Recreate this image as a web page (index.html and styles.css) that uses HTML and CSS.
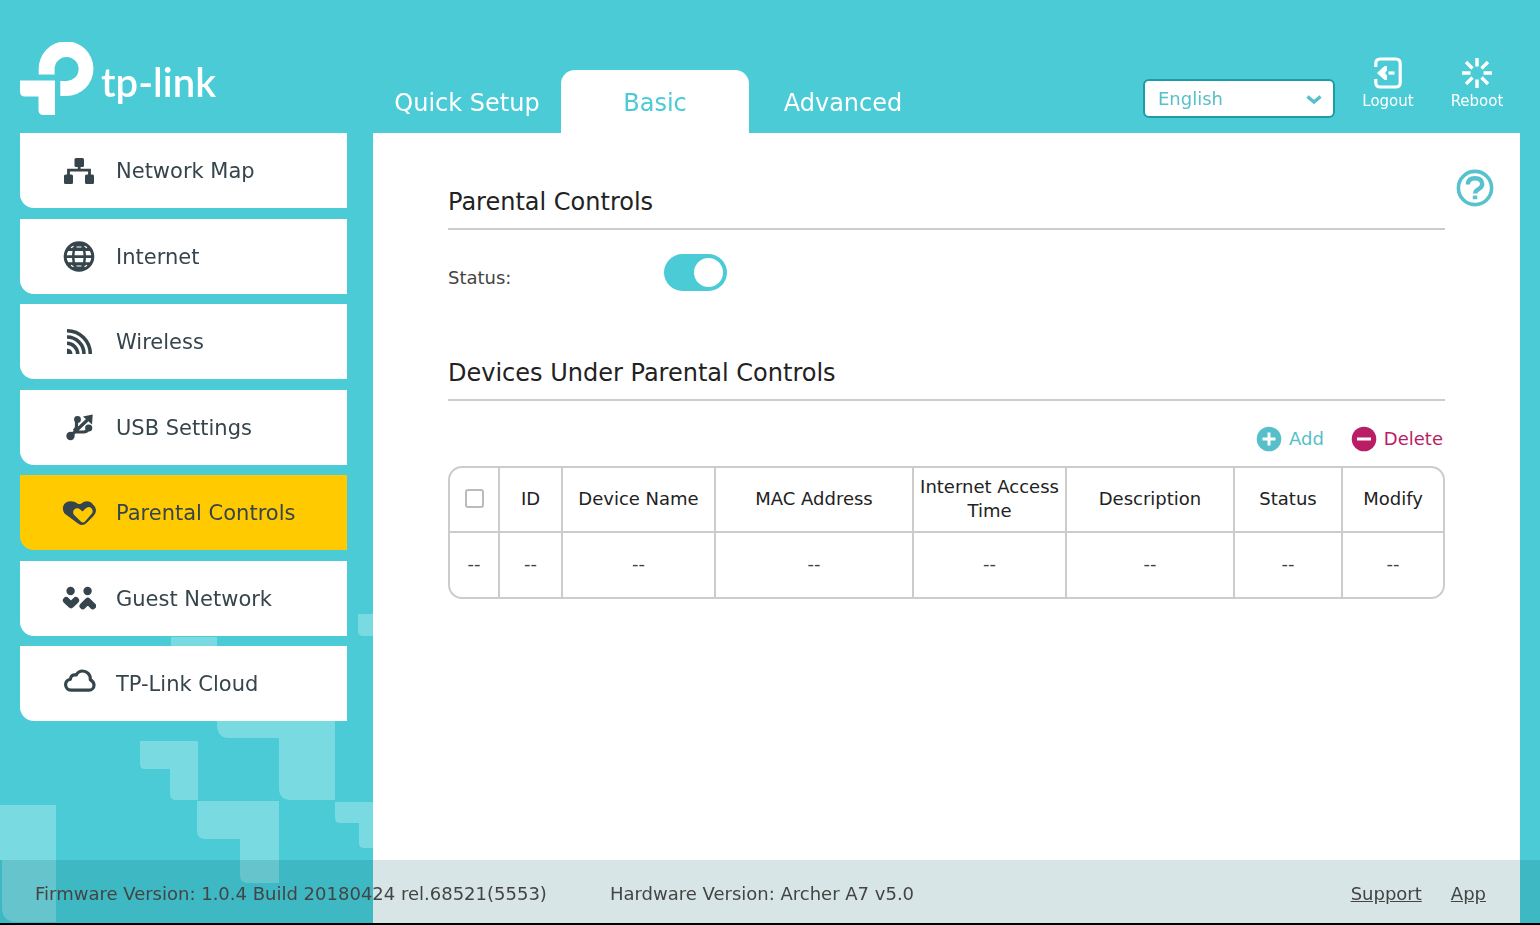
FILE: index.html
```html
<!DOCTYPE html>
<html lang="en">
<head>
<meta charset="utf-8">
<meta name="viewport" content="width=device-width, initial-scale=1">
<title>Parental Controls</title>
<link rel="stylesheet" href="styles.css">
</head>
<body>
<svg class="backdrop" viewBox="0 613 373 310" aria-hidden="true">
  <path d="M358 614h20v22h-15q-5 0-5-5z"/>
  <path d="M171 637h46v40h-46z"/>
  <path d="M217 700h118v100h-44q-12 0-12-12v-50h-50q-12 0-12-14z"/>
  <path d="M140 741h58v59h-22q-6 0-6-6v-25h-25q-5 0-5-5z"/>
  <path d="M197 801h82v82h-31q-8 0-8-8v-36h-35q-8 0-8-8z"/>
  <path d="M335 802h43v46h-14q-5 0-5-5v-20h-19q-5 0-5-5z"/>
  <path d="M0 805h56v117H17q-15 0-15-15v-47H0z"/>
</svg>

<header class="header">
  <div class="brand">
    <svg class="brand-mark" viewBox="20 42 74 73" aria-hidden="true">
      <path d="M38.7 74.4V69.5a27.4 27.4 0 1 1 27.4 26.6h-5.8V81H66a12 12 0 1 0-11.4-12v5.4z"/>
      <path d="M20 80.4h35V115H43.500q-5 0-5-5V96.600H25q-5 0-5-5z"/>
    </svg>
    <span class="brand-name">tp-link</span>
  </div>
  <nav class="tabs" aria-label="Sections">
    <a class="tab" href="#quick">Quick Setup</a>
    <a class="tab tab-active" href="#basic" aria-current="page">Basic</a>
    <a class="tab" href="#advanced">Advanced</a>
  </nav>
  <div class="tools">
    <div class="language">
      <select class="language-select" aria-label="Language"><option>English</option></select>
      <svg class="language-arrow" viewBox="0 0 16 10" aria-hidden="true"><path d="M1.500 1.500l6.500 5.500 6.500-5.500"/></svg>
    </div>
    <button class="tool" type="button">
      <svg class="tool-icon" viewBox="0 0 32 32" aria-hidden="true">
        <path d="M3.800 10V6.500q0-4.500 4.500-4.500h15.400q4.500 0 4.500 4.500v19q0 4.500-4.500 4.500H8.300q-4.500 0-4.500-4.500v-3.500" stroke-width="3.200"/>
        <path d="M16.500 16h6" stroke-width="3.200"/>
        <path d="M5.500 16l7-6.500h2v4L12.500 16l2 2.500v4h-2z" class="solid" stroke-width="1"/>
      </svg>
      <span>Logout</span>
    </button>
    <button class="tool" type="button">
      <svg class="tool-icon" viewBox="0 0 32 32" aria-hidden="true">
        <path stroke-width="3.400" d="M16 1v8.500M16 22.500V31M1 16h8.500M22.500 16H31M5 5l6.500 6.500M20.500 20.500L27 27M27 5l-6.500 6.500M11.500 20.500L5 27"/>
      </svg>
      <span>Reboot</span>
    </button>
  </div>
</header>

<div class="layout">
  <nav class="menu" aria-label="Basic settings">
    <a class="menu-item" href="#map">
      <svg class="menu-icon" viewBox="0 0 34 34" aria-hidden="true">
        <rect x="12.500" y="4" width="9.500" height="9" rx="1.500"/><rect x="2" y="20.500" width="9" height="9.500" rx="1.500"/><rect x="23" y="20.500" width="9" height="9.500" rx="1.500"/>
        <path class="line" stroke-width="2.800" d="M17.200 12v4M6.500 22v-5.800h21V22"/>
      </svg>Network Map</a>
    <a class="menu-item" href="#internet">
      <svg class="menu-icon" viewBox="0 0 34 34" aria-hidden="true">
        <circle cx="17" cy="16.500" r="15.300"/>
        <path class="cut" d="M13 11h8l.5 4.300h-9zM12.500 18h9L21 22.300h-8zM6.200 11h4.300l-.5 4.300H4.800q.2-2.500 1.400-4.300zM27.800 11h-4.300l.5 4.300h5.200q-.2-2.500-1.400-4.300zM4.800 18H10l.5 4.300H6.200Q5 20.500 4.800 18zM29.200 18H24l-.5 4.300h4.300q1.200-1.800 1.400-4.300z"/>
        <path class="cut-line" d="M14.500 7h5M9 7.800l2.500-1.600M25 7.800l-2.500-1.600M14.500 26h5M9 25.200l2.500 1.600M25 25.200l-2.500 1.600"/>
      </svg>Internet</a>
    <a class="menu-item" href="#wireless">
      <svg class="menu-icon" viewBox="0 0 34 34" aria-hidden="true">
        <path d="M5 23.500A5.500 5.500 0 0 1 10.500 29H5z"/>
        <path class="line" stroke-width="3.600" d="M5 18.300A10.700 10.700 0 0 1 15.700 29M5 12A17 17 0 0 1 22 29M5 5.700A23.300 23.300 0 0 1 28.300 29"/>
      </svg>Wireless</a>
    <a class="menu-item" href="#usb">
      <svg class="menu-icon" viewBox="0 0 34 34" aria-hidden="true">
        <circle cx="8.500" cy="25" r="4.200"/><circle cx="15.500" cy="8.500" r="3.400"/>
        <circle cx="26.700" cy="17" r="3.600"/>
        <path d="M21 5.500L30.700 3.500 30 13.500z"/>
        <path class="line" stroke-width="3.200" d="M8.500 25L27.500 7M14.500 9v6.500q0 2-2.500 4.500M27 17q-2 4-5.500 4h-8"/>
      </svg>USB Settings</a>
    <a class="menu-item menu-item-active" href="#parental" aria-current="page">
      <svg class="menu-icon" viewBox="0 0 34 34" aria-hidden="true">
        <path d="M8.500 5.200q4.500 0 7 2.300 1.800 1 3.800 0 2.500-2.300 5.700-2.300 3.500 0 6 3.300 3 2.500 3 6 0 3-2.500 5.500L24.500 27q-4 3.800-8.500.5L2.500 17.500Q-.5 13 2 8.500q2.500-3.300 6.500-3.300z"/>
        <path class="heart-cut" d="M21 26.500q-1.200 0-2.200-1l-6.600-6.500q-2.200-3 0-5.500 3-2.500 6 0l2.300 2 3-3q3-2.800 5.700-.5 2.800 3 .3 6l-6.500 7.500q-1 1-2 1z"/>
      </svg>Parental Controls</a>
    <a class="menu-item" href="#guest">
      <svg class="menu-icon" viewBox="0 0 34 34" aria-hidden="true">
        <circle cx="8.600" cy="9" r="4.200"/><circle cx="25.600" cy="9" r="4.200"/>
        <path class="line" stroke-width="6.600" stroke-linejoin="round" stroke-linecap="round" d="M4.200 18.300L9 23l4.800-4.700M20.800 24l5-5 5 5"/>
      </svg>Guest Network</a>
    <a class="menu-item" href="#cloud">
      <svg class="menu-icon" viewBox="0 0 34 34" aria-hidden="true">
        <path class="line" stroke-width="3.200" stroke-linejoin="round" d="M9 23.200h18a5 5 0 0 0 5-5c0-3-1.700-4.500-3.700-5.500.5-5-3.500-8.700-7.800-8.700-3 0-5 1.500-6.300 4-3.200-.8-5.700 1-5.900 4.300-3 .7-4.700 2.500-4.700 5.300 0 3.400 2.400 5.600 5.400 5.600z"/>
      </svg>TP-Link Cloud</a>
  </nav>

  <main class="content">
    <button class="help" type="button" aria-label="Help">
      <svg class="help-icon" viewBox="0 0 38 38" aria-hidden="true">
        <circle cx="19" cy="19" r="16.600" stroke-width="3.600"/>
        <path stroke-width="4.400" d="M11.800 15.500q.3-6.300 7.200-6.300t7.200 5.800q0 3-3.700 5.200-3.300 2-3.300 4.300"/>
        <path stroke-width="4.400" d="M19 26.600v3.600"/>
      </svg>
    </button>

    <section class="panel">
      <h2 class="panel-title">Parental Controls</h2>
      <div class="field">
        <label class="field-label" for="status">Status:</label>
        <input class="switch" id="status" type="checkbox" role="switch" checked>
      </div>
    </section>

    <section class="panel">
      <h2 class="panel-title">Devices Under Parental Controls</h2>
      <div class="actions">
        <button class="action action-add" type="button">
          <svg class="action-icon" viewBox="0 0 26 26" aria-hidden="true"><circle cx="13" cy="13" r="12.300"/><path d="M6.500 13h13M13 6.500v13"/></svg>Add</button>
        <button class="action action-delete" type="button">
          <svg class="action-icon" viewBox="0 0 26 26" aria-hidden="true"><circle cx="13" cy="13" r="12.300"/><path d="M6 13h14"/></svg>Delete</button>
      </div>
      <table class="devices">
        <colgroup><col class="c-check"><col class="c-id"><col class="c-name"><col class="c-mac"><col class="c-time"><col class="c-desc"><col class="c-status"><col class="c-modify"></colgroup>
        <thead>
          <tr>
            <th><input class="check" type="checkbox" aria-label="Select all devices"></th>
            <th>ID</th><th>Device Name</th><th>MAC Address</th><th>Internet Access Time</th><th>Description</th><th>Status</th><th>Modify</th>
          </tr>
        </thead>
        <tbody>
          <tr><td>--</td><td>--</td><td>--</td><td>--</td><td>--</td><td>--</td><td>--</td><td>--</td></tr>
        </tbody>
      </table>
    </section>
  </main>
</div>

<footer class="footer">
  <span>Firmware Version: 1.0.4 Build 20180424 rel.68521(5553)</span>
  <span>Hardware Version: Archer A7 v5.0</span>
  <div class="footer-links"><a href="#support">Support</a><a href="#app">App</a></div>
</footer>
</body>
</html>
```

FILE: styles.css
```css
:root {
  --teal: #4acbd6;
  --ink: #36444b;
  --line: #cccccc;
}

* { box-sizing: border-box; }

body {
  margin: 0;
  min-height: 100vh;
  display: flex;
  flex-direction: column;
  background: var(--teal);
  color: #444;
  font: 18px/24px "DejaVu Sans", Verdana, sans-serif;
}

button, select, input { font: inherit; margin: 0; }
button { border: 0; padding: 0; background: none; cursor: pointer; }
a { color: inherit; }
svg { fill: currentColor; flex: none; }

.backdrop {
  position: fixed;
  left: 0;
  bottom: 2px;
  width: 373px;
  height: 310px;
  color: #7adae1;
  z-index: -1;
}

/* Header */
.header {
  display: flex;
  align-items: flex-end;
  padding: 0 36px 0 20px;
  height: 133px;
  color: #fff;
}
.brand {
  display: flex;
  align-items: center;
  gap: 7px;
  width: 353px;
  padding-bottom: 18px;
}
.brand-mark { width: 74px; height: 73px; }
.brand-name { font: 600 40px/48px Lato, sans-serif; padding-top: 6px; }

.tabs { display: flex; }
.tab {
  width: 188px;
  height: 63px;
  border-radius: 14px 14px 0 0;
  font-size: 24px;
  line-height: 66px;
  text-align: center;
  text-decoration: none;
}
.tab-active { background: #fff; color: var(--teal); }

.tools {
  display: flex;
  align-items: flex-end;
  margin-left: auto;
}
.language { position: relative; margin: 0 26px 15px 0; }
.language-select {
  display: block;
  width: 192px;
  height: 39px;
  padding: 0 36px 0 13px;
  border: 2px solid #1f9ba5;
  border-radius: 6px;
  appearance: none;
  background: #fff;
  color: #56bfc9;
}
.language-arrow {
  position: absolute;
  right: 13px;
  top: 16px;
  width: 16px;
  height: 10px;
  fill: none;
  stroke: #56bfc9;
  stroke-width: 3.4;
  pointer-events: none;
}
.tool {
  display: flex;
  flex-direction: column;
  align-items: center;
  gap: 2px;
  width: 54px;
  margin-bottom: 22px;
  color: #fff;
  font-size: 15px;
  line-height: 20px;
}
.tool + .tool { margin-left: 35px; }
.tool-icon { width: 32px; height: 32px; fill: none; stroke: currentColor; }
.tool-icon .solid { fill: currentColor; }

/* Page body */
.layout {
  display: flex;
  flex: 1;
  gap: 26px;
  padding: 0 20px;
}
.menu { width: 327px; flex: none; }
.menu-item {
  display: flex;
  align-items: center;
  gap: 20px;
  height: 75px;
  margin-bottom: 10px;
  padding: 1px 0 0 42px;
  border-radius: 0 0 0 14px;
  background: #fff;
  color: var(--ink);
  font-size: 21px;
  text-decoration: none;
}
.menu-item:nth-child(odd) { margin-bottom: 11px; }
.menu-item-active { background: #ffcb00; }
.menu-icon { width: 34px; height: 34px; }
.menu-icon .line { fill: none; stroke: currentColor; }
.menu-icon .cut { fill: #fff; }
.menu-icon .cut-line { fill: none; stroke: #fff; stroke-width: 1.2; }
.menu-icon .heart-cut { fill: #ffcb00; }

.content {
  position: relative;
  flex: 1;
  min-width: 0;
  padding: 51px 75px 84px;
  background: #fff;
}
.help { position: absolute; top: 36px; right: 26px; color: #56c2cd; }
.help-icon { display: block; width: 38px; height: 38px; fill: none; stroke: currentColor; }

.panel { margin-bottom: 64px; }
.panel-title {
  margin: 0;
  padding-bottom: 8px;
  border-bottom: 2px solid var(--line);
  color: #222;
  font-size: 24px;
  font-weight: 400;
  line-height: 36px;
}
.field { display: flex; padding-top: 24px; }
.field-label { width: 216px; padding-top: 12px; }
.switch {
  appearance: none;
  width: 63px;
  height: 37px;
  padding: 4px;
  border-radius: 19px;
  background: var(--teal);
  cursor: pointer;
}
.switch::before {
  content: "";
  display: block;
  width: 29px;
  height: 29px;
  border-radius: 50%;
  background: #fff;
}
.switch:checked::before { margin-left: auto; }

.actions {
  display: flex;
  justify-content: flex-end;
  gap: 27px;
  padding: 25px 2px 14px;
}
.action {
  display: flex;
  align-items: center;
  gap: 7px;
  line-height: 26px;
}
.action-add { color: #56bfc9; }
.action-delete { color: #b81d66; }
.action-icon { width: 26px; height: 26px; }
.action-icon path { stroke: #fff; stroke-width: 3; }

.devices {
  width: 100%;
  table-layout: fixed;
  border: 2px solid var(--line);
  border-radius: 14px;
  border-spacing: 0;
  text-align: center;
}
.devices th, .devices td {
  height: 64px;
  padding: 0 0 2px;
  border-right: 2px solid var(--line);
}
.devices th {
  height: 65px;
  border-bottom: 2px solid var(--line);
  color: #222;
  font-weight: 400;
}
.devices tr > :last-child { border-right: 0; }
.c-check { width: 50px; }
.c-id { width: 63px; }
.c-name, .c-time { width: 153px; }
.c-mac { width: 198px; }
.c-desc { width: 168px; }
.c-status { width: 108px; }
.c-modify { width: 100px; }
.check {
  display: block;
  margin: 0 auto;
  width: 19px;
  height: 19px;
  appearance: none;
  border: 2px solid #bbb;
  border-radius: 3px;
  background: #fff;
}
.check:checked { background: var(--teal); }

/* Footer */
.footer {
  position: fixed;
  inset: auto 0 0;
  display: flex;
  align-items: center;
  gap: 63px;
  height: 65px;
  padding: 4px 54px 0 35px;
  border-bottom: 2px solid #000;
  background: rgba(0, 87, 94, 0.155);
}
.footer-links { display: flex; gap: 29px; margin-left: auto; }
```
